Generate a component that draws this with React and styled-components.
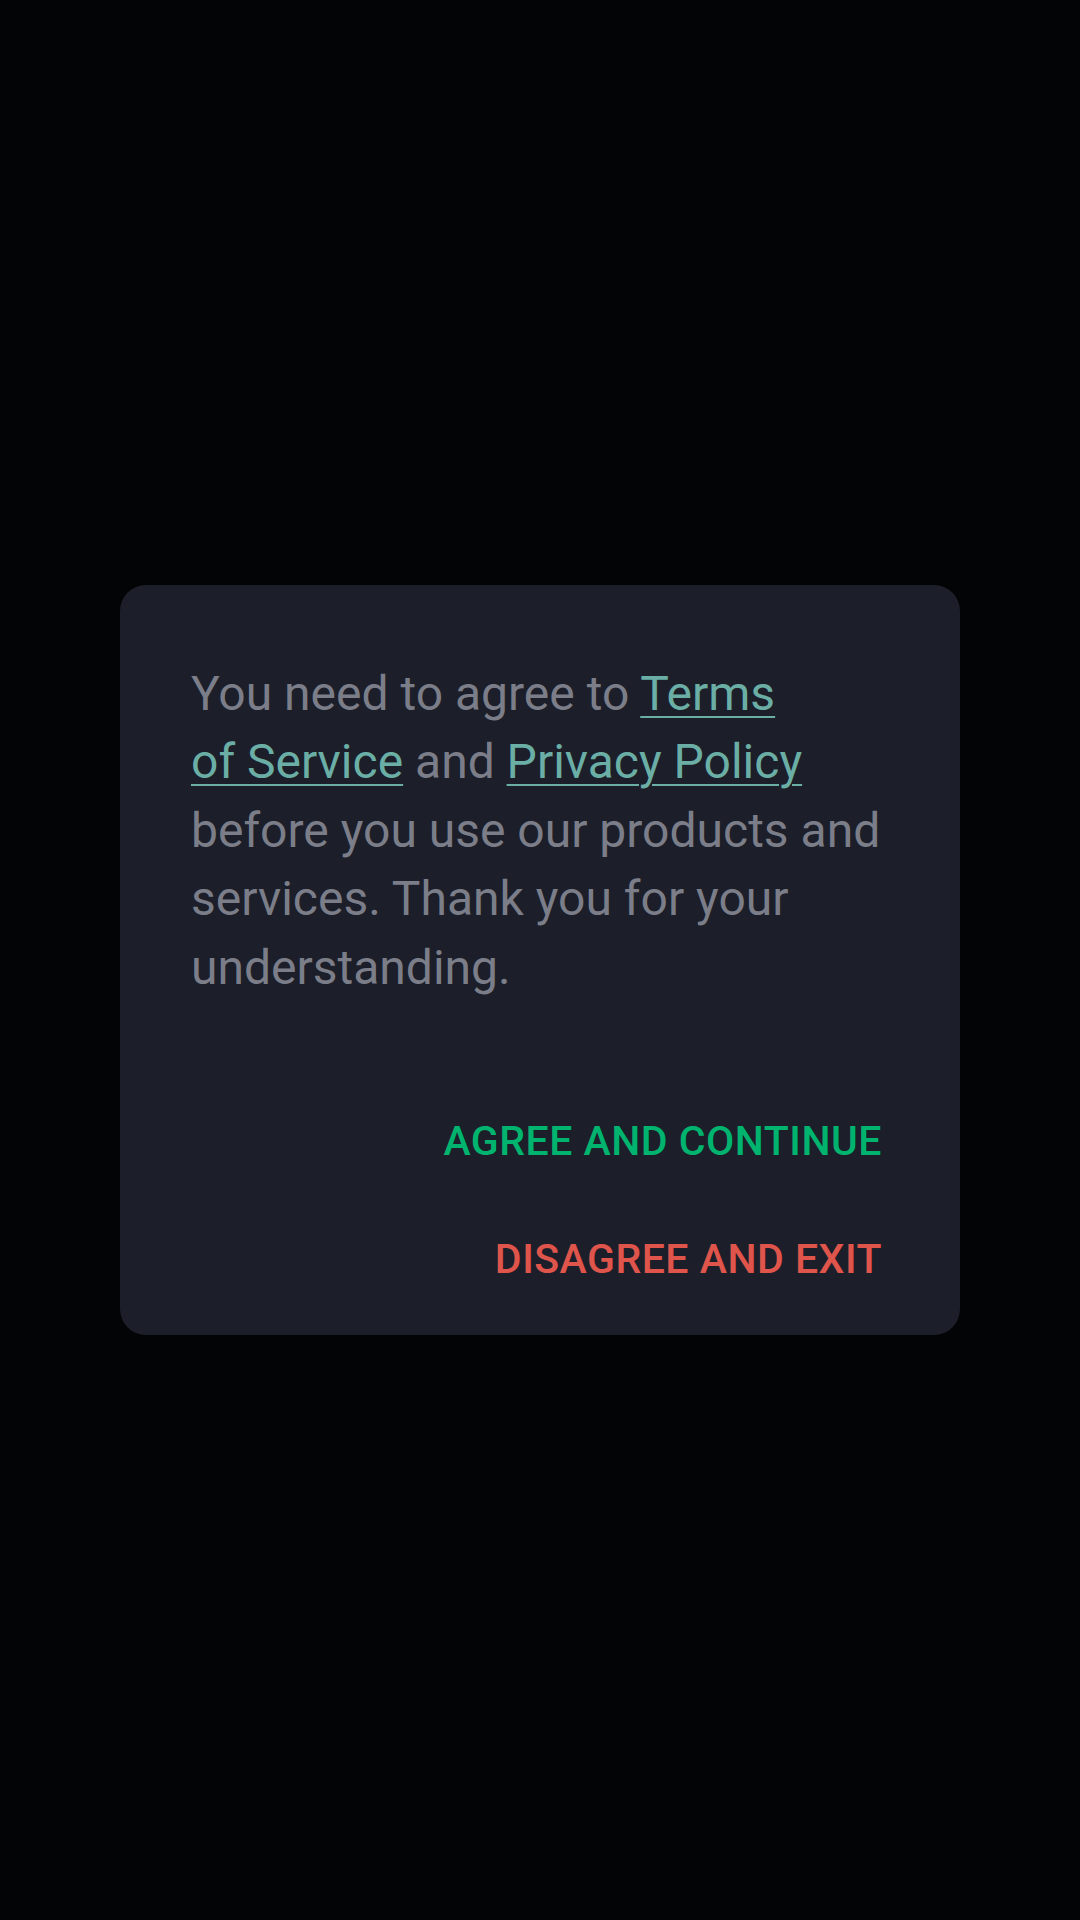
import React from "react";
import styled, { createGlobalStyle } from "styled-components";

const GlobalStyle = createGlobalStyle`
  html, body {
    margin: 0;
    padding: 0;
    background: #030406;
  }
  #root {
    min-height: 1920px;
  }
`;

const Screen = styled.div`
  width: 1080px;
  height: 1920px;
  display: flex;
  align-items: center;
  justify-content: center;
  background: #030406;
  font-family: Roboto, "Noto Sans", sans-serif;
`;

const Dialog = styled.div`
  width: 840px;
  box-sizing: border-box;
  background: #1c1f29;
  border-radius: 26px;
  padding: 75px 78px 17px 71px;
  display: flex;
  flex-direction: column;
`;

const Message = styled.p`
  margin: 0;
  font-size: 48px;
  line-height: 68.5px;
  color: #7b7e89;
`;

const TextLink = styled.a`
  color: #6aaea6;
  text-decoration: underline;
  text-underline-offset: 6px;
  text-decoration-thickness: 2px;
`;

const Actions = styled.div`
  margin-top: 80px;
  display: flex;
  flex-direction: column;
  align-items: flex-end;
`;

const ActionButton = styled.button`
  background: none;
  border: none;
  padding: 35px 0;
  font-family: Roboto, "Noto Sans", sans-serif;
  font-size: 41px;
  line-height: 48px;
  font-weight: 500;
  letter-spacing: 0.5px;
  color: ${(p) => (p.$danger ? "#e0554b" : "#00b46f")};
  cursor: pointer;
`;

export default function App() {
  return (
    <>
      <GlobalStyle />
      <Screen>
        <Dialog>
          <Message>
            You need to agree to <TextLink>Terms</TextLink>
            <br />
            <TextLink>of Service</TextLink> and <TextLink>Privacy Policy</TextLink>{" "}
            before you use our products and services. Thank you for your
            understanding.
          </Message>
          <Actions>
            <ActionButton>AGREE AND CONTINUE</ActionButton>
            <ActionButton $danger>DISAGREE AND EXIT</ActionButton>
          </Actions>
        </Dialog>
      </Screen>
    </>
  );
}
